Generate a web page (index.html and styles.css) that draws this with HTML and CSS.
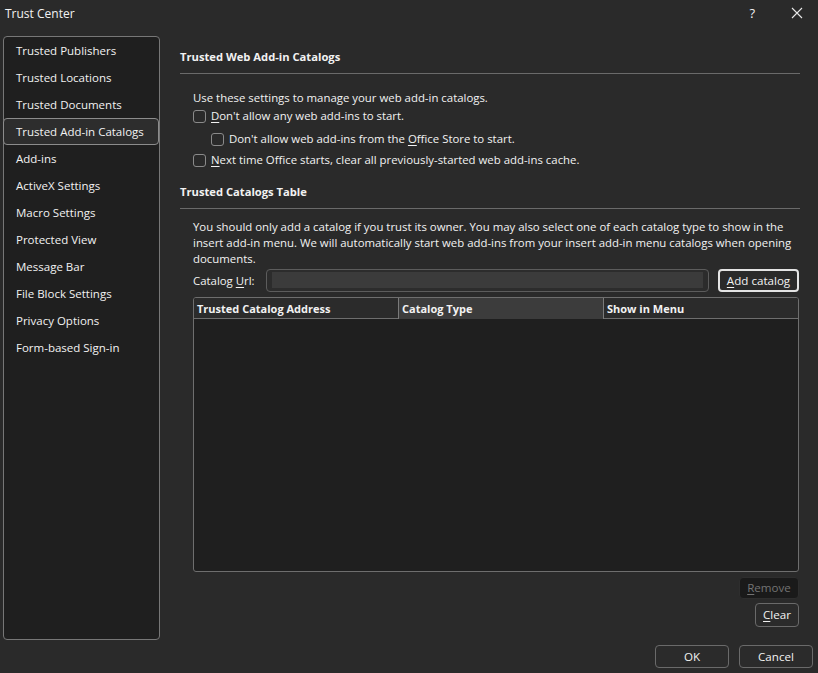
FILE: index.html
```html
<!DOCTYPE html>
<html lang="en">
<head>
<meta charset="utf-8">
<title>Trust Center</title>
<link rel="stylesheet" href="styles.css">
</head>
<body>
<div class="window">
  <div class="titlebar">
    <span class="title">Trust Center</span>
    <span class="title-actions">
      <span class="help">?</span>
      <svg class="close" width="12" height="12" viewBox="0 0 12 12"><path d="M1 1 L11 11 M11 1 L1 11" stroke="#e8e8e8" stroke-width="1.1" fill="none"/></svg>
    </span>
  </div>
  <div class="main">
    <nav class="sidebar">
      <div class="nav-item">Trusted Publishers</div>
      <div class="nav-item">Trusted Locations</div>
      <div class="nav-item">Trusted Documents</div>
      <div class="nav-item selected">Trusted Add-in Catalogs</div>
      <div class="nav-item">Add-ins</div>
      <div class="nav-item">ActiveX Settings</div>
      <div class="nav-item">Macro Settings</div>
      <div class="nav-item">Protected View</div>
      <div class="nav-item">Message Bar</div>
      <div class="nav-item">File Block Settings</div>
      <div class="nav-item">Privacy Options</div>
      <div class="nav-item">Form-based Sign-in</div>
    </nav>
    <section class="content">
      <h2 class="section-title first">Trusted Web Add-in Catalogs</h2>
      <div class="rule"></div>
      <div class="block">
        <p class="intro">Use these settings to manage your web add-in catalogs.</p>
        <label class="check row1"><span class="box"></span><span><u>D</u>on't allow any web add-ins to start.</span></label>
        <label class="check row2 indent"><span class="box"></span><span>Don't allow web add-ins from the <u>O</u>ffice Store to start.</span></label>
        <label class="check row3"><span class="box"></span><span><u>N</u>ext time Office starts, clear all previously-started web add-ins cache.</span></label>
      </div>
      <h2 class="section-title second">Trusted Catalogs Table</h2>
      <div class="rule"></div>
      <div class="block">
        <p class="desc">You should only add a catalog if you trust its owner. You may also select one of each catalog type to show in the<br>insert add-in menu. We will automatically start web add-ins from your insert add-in menu catalogs when opening<br>documents.</p>
        <div class="url-row">
          <span class="url-label">Catalog <u>U</u>rl:</span>
          <div class="url-input"><div class="url-fill"></div></div>
          <button class="btn default"><u>A</u>dd catalog</button>
        </div>
        <div class="table">
          <div class="thead">
            <div class="th">Trusted Catalog Address</div>
            <div class="th hover">Catalog Type</div>
            <div class="th">Show in Menu</div>
          </div>
          <div class="tbody"></div>
        </div>
        <div class="table-actions">
          <button class="btn disabled"><u>R</u>emove</button>
          <button class="btn clear"><u>C</u>lear</button>
        </div>
      </div>
    </section>
  </div>
  <div class="footer">
    <button class="btn footer-btn">OK</button>
    <button class="btn footer-btn">Cancel</button>
  </div>
</div>
</body>
</html>
```
FILE: styles.css
```css
* { box-sizing: border-box; }
html, body {
  margin: 0;
  padding: 0;
  background: #2a2a2a;
}
body {
  font-family: "Open Sans", "Noto Sans", "Liberation Sans", sans-serif;
  font-size: 11.4px;
  color: #f2f2f2;
}
u { text-decoration: underline; text-underline-offset: 2px; text-decoration-thickness: 1px; }
.window {
  width: 818px;
  height: 673px;
  display: flex;
  flex-direction: column;
}
.titlebar {
  height: 28px;
  display: flex;
  align-items: center;
  justify-content: space-between;
  padding: 0 15px 0 5px;
  flex: none;
}
.title { font-size: 12px; line-height: 16px; margin-top: 0; }
.title-actions {
  display: flex;
  align-items: center;
  gap: 36px;
  margin-top: -2px;
}
.help { font-size: 13px; line-height: 16px; }
.close { display: block; }
.main {
  display: flex;
  height: 612px;
  flex: none;
}
.sidebar {
  margin: 8px 0 0 3px;
  width: 157px;
  height: 604px;
  background: #1f1f1f;
  border: 1px solid #777;
  border-radius: 4px;
  display: flex;
  flex-direction: column;
}
.nav-item {
  height: 27px;
  line-height: 27px;
  padding-left: 12px;
  font-size: 11.5px;
  white-space: nowrap;
}
.nav-item.selected {
  background: #2d2d2d;
  border: 1px solid #8c8c8c;
  border-radius: 4px;
  line-height: 25px;
  margin: 0 0 0 -1px;
  padding-left: 12px;
}
.content {
  margin-left: 20px;
  width: 620px;
}
.section-title {
  margin: 0;
  font-size: 11.2px;
  font-weight: 700;
  line-height: 16px;
}
.section-title.first { margin-top: 21px; }
.section-title.second { margin-top: 16px; }
.rule {
  height: 1px;
  background: #6a6a6a;
  margin-top: 8px;
}
.block { padding-left: 13px; }
.intro { margin: 16px 0 0; line-height: 16px; white-space: nowrap; }
.check {
  display: flex;
  align-items: center;
  gap: 5px;
  line-height: 16px;
  white-space: nowrap;
}
.check.indent { padding-left: 18px; }
.row1 { margin-top: 2px; }
.row2 { margin-top: 7px; }
.row3 { margin-top: 5px; }
.box {
  width: 13px;
  height: 13px;
  border: 1px solid #8a8a8a;
  border-radius: 3px;
  flex: none;
}
.desc {
  margin: 10px 0 0;
  line-height: 16px;
  white-space: nowrap;
}
.url-row {
  display: flex;
  align-items: center;
  margin-top: 2px;
  height: 23px;
}
.url-label { width: 73px; flex: none; }
.url-input {
  width: 443px;
  height: 23px;
  border: 1px solid #5c5c5c;
  border-radius: 4px;
  background: #2c2c2c;
  padding: 2px 5px 3px 5px;
  flex: none;
}
.url-fill {
  height: 100%;
  background: #3b3b3b;
}
.btn {
  font-family: inherit;
  font-size: 11.6px;
  color: #f2f2f2;
  background: #2b2b2b;
  border: 1px solid #6a6a6a;
  border-radius: 4px;
  padding: 0;
  height: 23px;
  line-height: 20px;
}
.btn.default {
  margin-left: 9px;
  width: 81px;
  border: 2px solid #e4e4e4;
  background: #2a2a2a;
}
.table {
  margin-top: 5px;
  width: 606px;
  height: 275px;
  border: 1px solid #6e6e6e;
  border-radius: 3px;
  background: #1f1f1f;
  display: flex;
  flex-direction: column;
  overflow: hidden;
}
.thead {
  display: grid;
  grid-template-columns: 205px 205px 1fr;
  height: 21px;
  border-bottom: 1px solid #6e6e6e;
  background: #2b2b2b;
}
.th {
  font-weight: 700;
  font-size: 11px;
  line-height: 21px;
  padding-left: 3px;
  border-right: 1px solid #6e6e6e;
  white-space: nowrap;
}
.th:last-child { border-right: none; }
.th.hover {
  background: #3c3c3c;
  border-left: 1px solid #7a7a7a;
  border-right: 1px solid #7a7a7a;
  margin-left: -1px;
}
.tbody { flex: 1; }
.table-actions {
  display: flex;
  flex-direction: column;
  align-items: flex-end;
  width: 606px;
}
.btn.disabled {
  margin-top: 5px;
  width: 60px;
  height: 22px;
  background: #1a1a1a;
  border-color: #2e2e2e;
  color: #737373;
}
.btn.clear {
  margin-top: 4px;
  width: 44px;
  height: 24px;
}
.footer {
  display: flex;
  justify-content: flex-end;
  gap: 10px;
  padding: 5px 5px 0 0;
}
.footer-btn {
  width: 74px;
  height: 23px;
}
```
